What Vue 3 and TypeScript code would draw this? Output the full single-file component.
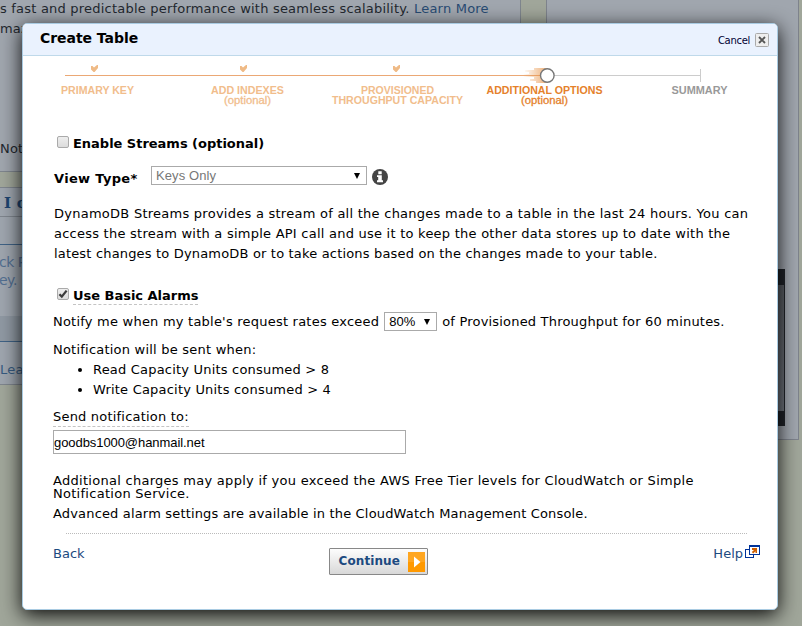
<script setup lang="ts">
interface Step {
  lines: string[]
  x: number
  widths: number[]
  state: 'done' | 'current' | 'todo'
}

const steps: Step[] = [
  { lines: ['PRIMARY KEY'], x: 74.5, widths: [73], state: 'done' },
  { lines: ['ADD INDEXES', '(optional)'], x: 224.5, widths: [73, 47], state: 'done' },
  { lines: ['PROVISIONED', 'THROUGHPUT CAPACITY'], x: 374.5, widths: [73, 131], state: 'done' },
  { lines: ['ADDITIONAL OPTIONS', '(optional)'], x: 521.5, widths: [116, 47], state: 'current' },
  { lines: ['SUMMARY'], x: 676.5, widths: [56], state: 'todo' },
]
const checks: number[] = [71, 220, 373]
const email = 'goodbs1000@hanmail.net'
</script>

<template>
  <div class="page">
    <div class="left">
      <div class="intro">
        <p>s fast and predictable performance with seamless scalability. <a>Learn More</a></p>
        <p>maz</p>
        <p class="note">Not</p>
      </div>
      <div class="strip"></div>
      <div class="card">
        <div class="card-head">I c</div>
        <div class="card-gap"></div>
        <div class="card-main">ck P<br />ey.</div>
        <div class="card-bar"></div>
        <div class="card-foot">Lea</div>
      </div>
    </div>
    <div class="right">
      <div class="media"></div>
    </div>

    <section class="modal">
      <header class="head">
        <h1>Create Table</h1>
        <span class="cancel">Cancel</span>
        <svg class="close" width="14" height="14" viewBox="0 0 14 14">
          <rect x=".5" y=".5" width="13" height="13" rx="1" fill="#eee" stroke="#aaa" />
          <path d="M4 4L10 10M10 4L4 10" stroke="#555" stroke-width="1.9" />
        </svg>
      </header>

      <svg class="steps" width="754" height="62" viewBox="0 0 754 62">
        <defs>
          <linearGradient id="trail" x1="0" x2="1">
            <stop offset="0" stop-color="#e8954a" stop-opacity="0" />
            <stop offset="1" stop-color="#e8954a" stop-opacity=".75" />
          </linearGradient>
        </defs>
        <path d="M42 19.5H518" stroke="#eba875" />
        <path d="M531 19.5H677M677.5 13V26" stroke="#ccc" fill="none" />
        <path
          v-for="c in checks"
          :key="c"
          :transform="`translate(${c - 3} 9)`"
          d="M0 1H1.5L3 2.6L6 0H7V3L3.6 7H2.6L0 4.4Z"
          fill="#efba86"
        />
        <path d="M511 12H524V27H513V25H507V23H511V21H500V18H506V16H502V14H511Z" fill="url(#trail)" />
        <circle cx="524.3" cy="19.5" r="6.8" fill="#fff" stroke="#777" stroke-width="1.4" />
        <g v-for="s in steps" :key="s.x" :class="s.state">
          <text
            v-for="(l, i) in s.lines"
            :key="l"
            :x="s.x"
            :y="38 + i * 10"
            :textLength="s.widths[i]"
            lengthAdjust="spacingAndGlyphs"
            :class="{ opt: l === '(optional)' }"
            text-anchor="middle"
          >{{ l }}</text>
        </g>
      </svg>

      <div class="body">
        <div class="check-row">
          <span class="box"></span><b>Enable Streams (optional)</b>
        </div>
        <div class="view-row">
          <b>View Type*</b>
          <div class="select wide"><span>Keys Only</span><i></i></div>
          <svg class="info" width="16" height="16" viewBox="0 0 16 16">
            <circle cx="8" cy="8" r="8" fill="#444" />
            <path d="M6.3 2.3H9.7V5.2H6.3ZM5 6.3H9.8V11.3H11V13.2H5V11.3H6.2V8H5Z" fill="#fff" />
          </svg>
        </div>
        <p class="desc">
          <span class="d1">DynamoDB Streams provides a stream of all the changes made to a table in the last 24 hours. You can</span><br />
          <span class="d2">access the stream with a simple API call and use it to keep the other data stores up to date with the</span><br />
          <span class="d3">latest changes to DynamoDB or to take actions based on the changes made to your table.</span>
        </p>
        <div class="check-row alarms">
          <span class="box">
            <svg width="10" height="10" viewBox="0 0 10 10"><path d="M1.4 5.2L3.8 7.6L8.6 1.6" fill="none" stroke="#3c3c3c" stroke-width="2.3" /></svg>
          </span><b class="dashed">Use Basic Alarms</b>
        </div>
        <div class="notify">
          <span class="n1">Notify me when my table's request rates exceed</span>
          <div class="select small"><span>80%</span><i></i></div>
          <span class="n2">of Provisioned Throughput for 60 minutes.</span>
        </div>
        <p class="when">Notification will be sent when:</p>
        <ul>
          <li>Read Capacity Units consumed &gt; 8</li>
          <li>Write Capacity Units consumed &gt; 4</li>
        </ul>
        <div class="send"><span class="dashed">Send notification to:</span></div>
        <div class="input">{{ email }}</div>
        <p class="charges">Additional charges may apply if you exceed the AWS Free Tier levels for CloudWatch or Simple<br />Notification Service.</p>
        <p class="advanced">Advanced alarm settings are available in the CloudWatch Management Console.</p>
        <div class="rule"></div>
        <footer>
          <a>Back</a>
          <div class="continue">
            <span>Continue</span>
            <svg width="17" height="20" viewBox="0 0 17 20">
              <rect width="17" height="20" fill="#f90" />
              <rect width="17" height="10" fill="#ffb13a" opacity=".55" />
              <path d="M6 4.5L12.5 10L6 15.5Z" fill="#fff" />
            </svg>
          </div>
          <a class="help">Help<svg width="15" height="13" viewBox="0 0 15 13">
            <rect x=".5" y="4.5" width="8" height="8" fill="#fff" stroke="#039" />
            <rect x="4.5" y=".5" width="10" height="9" fill="#fff" stroke="#039" />
            <path d="M4 1H15" stroke="#039" stroke-width="2" />
            <path d="M7 3H12V8H10.5V6.2L8.2 8.5L6.8 7.1L9 5H7Z" fill="#d06000" />
          </svg></a>
        </footer>
      </div>
    </section>
  </div>
</template>

<style>
html, body { margin: 0; overflow: hidden; }
</style>

<style scoped>
.page {
  position: relative;
  display: flex;
  width: 802px;
  height: 626px;
  overflow: hidden;
  background: #a0a69a;
  font: 13px/20px "DejaVu Sans", Verdana, sans-serif;
  letter-spacing: 0.2px;
  color: #000;
  white-space: nowrap;
}
* { box-sizing: border-box; }
p, h1, ul { margin: 0; padding: 0; font-size: 13px; }
.left { width: 521px; }
.intro { height: 172px; background: #a0a6ae; border-right: 1px solid #7e858d; border-bottom: 1px solid #7e858d; color: #23282e; overflow: hidden; }
.intro p { margin-top: -1px; margin-bottom: 1px; letter-spacing: 0.21px; }
.intro a { color: #284b73; }
.intro .note { margin-top: 100px; }
.strip { height: 15px; }
.card { background: #9ea5ae; border-top: 1px solid #7e858d; border-bottom: 1px solid #7e858d; height: 198px; overflow: hidden; }
.card-head { height: 29px; border-bottom: 1px solid #7e858d; padding: 5px 0 0 4px; font: bold 15px/20px "DejaVu Serif", serif; color: #1d4470; }
.card-gap { height: 28px; border-bottom: 1px solid #3f6285; }
.card-main { height: 71px; padding-top: 8px; margin-left: -1px; font-size: 14px; line-height: 18px; letter-spacing: -0.5px; color: #536f91; }
.card-bar { height: 26px; background: #8f98a2; border-bottom: 1px solid #3f6285; }
.card-foot { padding-top: 18px; color: #365a80; }
.right { width: 253px; height: 440px; margin-left: 25px; background: #a0a6ae; border: 1px solid #7e838c; border-top: 0; }
.media { width: 40px; height: 157px; margin: 269px 0 0 198px; background: linear-gradient(135deg, #53575d, #70757d); border: solid #20242a; border-width: 16px 1px 15px 0; }

.modal { position: absolute; left: 22px; top: 23px; width: 756px; height: 587px; background: #fff; border: 1px solid #a9cbe2; border-radius: 5px; box-shadow: 0 5px 20px rgba(0, 0, 0, 0.95); }
.head { display: flex; align-items: center; height: 32px; padding: 0 8px 0 17px; background: #eaf2fe; border-bottom: 1px solid #bfd9ea; border-radius: 4px 4px 0 0; }
.head h1 { flex: 1; margin-top: -3px; font-size: 14px; letter-spacing: -0.05px; }
.cancel { margin: 3px 5px 0 0; font-size: 10px; letter-spacing: -0.3px; color: #003; }
.close { margin-top: 1px; }
.steps { display: block; font: bold 10.6px "Liberation Sans", Arial, sans-serif; letter-spacing: 0; }
.done { fill: #f1bd8c; }
.done .opt { stroke: #f1bd8c; }
.current { fill: #e5812b; }
.current .opt { stroke: #e5812b; }
.todo { fill: #999; }
.steps .opt { font-weight: normal; stroke-width: 0.3px; font-size: 11px; }

.body { padding: 16px 17px 0 30px; }
.check-row { display: flex; align-items: center; height: 20px; padding-left: 4px; }
.check-row b { letter-spacing: -0.02px; }
.box { width: 12px; height: 12px; margin: -4px 4px 0 0; border: 1px solid #aaa; border-radius: 2px; background: linear-gradient(#eee, #dcdcdc); }
.box svg { display: block; }
.view-row { display: flex; align-items: center; height: 24px; margin-top: 12px; padding-left: 1px; }
.view-row b { width: 97px; padding-top: 2px; letter-spacing: 0.32px; }
.select { display: flex; align-items: center; justify-content: space-between; height: 19px; border: 1px solid #aaa; font: 13px/17px "Liberation Sans", Arial, sans-serif; background: #fff; }
.select i { border: 3.5px solid transparent; border-top: 6px solid #000; border-bottom: 0; margin-right: 6px; }
.wide { align-self: flex-start; width: 216px; padding-left: 4px; color: #777; letter-spacing: 0.1px; }
.small { width: 53px; padding-left: 4px; margin: -1px 5px 0; letter-spacing: 0; }
.info { margin: -2px 0 0 5px; }
.desc { margin-top: 14px; padding-left: 1px; }
.d1 { letter-spacing: 0.255px; }
.d2 { letter-spacing: 0.24px; }
.d3 { letter-spacing: 0.175px; }
.alarms { margin-top: 22px; }
.dashed { display: inline-block; height: 18px; line-height: 20px; border-bottom: 1px dashed #c4c4c4; }
.alarms .dashed { line-height: 18px; }
.notify { display: flex; align-items: center; height: 20px; margin-top: 6px; }
.n1 { letter-spacing: 0.222px; }
.n2 { letter-spacing: 0.19px; }
.when { margin-top: 8px; letter-spacing: 0.22px; }
ul { padding-left: 40px; }
.send { height: 20px; margin-top: 7px; }
.send .dashed { height: 20px; }
.input { width: 353px; height: 24px; margin-top: 3px; border: 1px solid #aaa; font: 13px/23px "Liberation Sans", Arial, sans-serif; letter-spacing: -0.07px; }
.charges { margin-top: 20px; line-height: 13px; letter-spacing: 0.278px; }
.advanced { margin-top: 4px; letter-spacing: 0.165px; }
.rule { margin: 9px 0 0 13px; width: 681px; height: 1px; background: repeating-linear-gradient(90deg, #bbb 0 1px, transparent 1px 2px); }
footer { display: flex; height: 40px; margin-top: 10px; color: #1c4a80; letter-spacing: 0; }
.continue { display: flex; align-items: center; justify-content: space-between; width: 99px; height: 27px; margin: 4px 0 0 244px; padding: 0 2px 0 9px; border: 1px solid #888; border-radius: 1px; background: linear-gradient(#fdfdfd, #d8d8d8); font-size: 12px; font-weight: bold; letter-spacing: 0.08px; }
.continue span { margin-top: -2px; }
.help { margin-left: auto; }
.help svg { margin-left: 2px; }
</style>
